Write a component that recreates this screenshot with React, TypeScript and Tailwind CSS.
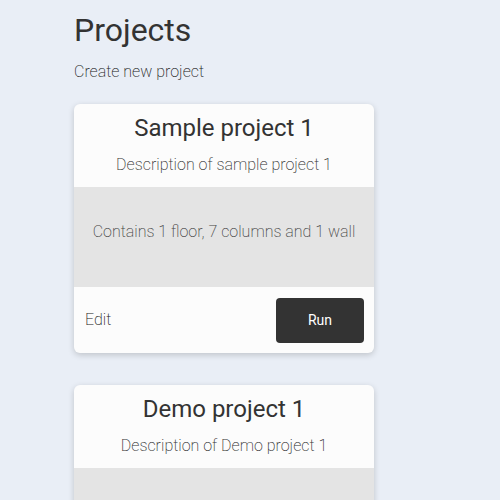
const projects = [
  {
    name: "Sample project 1",
    description: "Description of sample project 1",
    summary: "Contains 1 floor, 7 columns and 1 wall",
  },
  {
    name: "Demo project 1",
    description: "Description of Demo project 1",
    summary: "Contains 2 floors, 12 columns and 4 walls",
  },
];

const light = "font-['Roboto',sans-serif] font-[160]";

const ProjectCard = ({ project }: { project: any }) => {
  return (
    <div className="w-[300px] bg-[#fcfcfc] rounded-md shadow-[0_2px_6px_rgba(0,0,0,0.18)] overflow-hidden">
      <div className="h-[83px] pt-[8px] text-center">
        <h2 className="text-[24px] leading-[32px] text-[#333]">{project.name}</h2>
        <p className={`mt-[11px] text-[16px] leading-[20px] text-[#333] ${light}`}>
          {project.description}
        </p>
      </div>
      <div className="h-[100px] bg-[#e4e4e4] flex justify-center pt-[35px]">
        <p className={`text-[16px] leading-[20px] text-[#444] ${light}`}>{project.summary}</p>
      </div>
      <div className="h-[66px] flex items-center justify-between pl-[11px] pr-[10px]">
        <button className={`text-[16px] text-[#222] ${light}`}>Edit</button>
        <button className="w-[88px] h-[45px] rounded-[4px] bg-[#333] text-white text-[14px] font-[450]">
          Run
        </button>
      </div>
    </div>
  );
};

export default function App() {
  return (
    <div className="min-h-[500px] bg-[#e9eef6] font-['Roboto',sans-serif] pl-[74px] pt-[10px]">
      <h1 className="text-[32px] leading-[40px] text-[#333]">Projects</h1>
      <p className={`mt-[12px] text-[16px] leading-[20px] text-[#222] ${light}`}>Create new project</p>
      <div className="mt-[22px] flex flex-col gap-[32px] pb-8">
        {projects.map((p) => (
          <ProjectCard key={p.name} project={p} />
        ))}
      </div>
    </div>
  );
}
